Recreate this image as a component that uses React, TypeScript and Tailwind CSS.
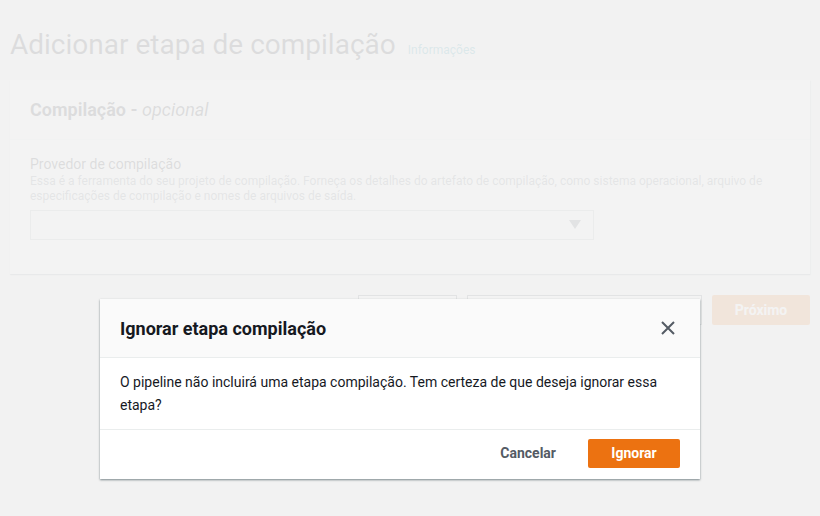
import React from "react";

const font = { fontFamily: "Roboto, 'Noto Sans', sans-serif" };

function CloseIcon() {
  return (
    <svg width="16" height="16" viewBox="0 0 16 16" fill="none">
      <path d="M2 2l12 12M14 2L2 14" stroke="#545b64" strokeWidth="2" />
    </svg>
  );
}

function BuildStepPage() {
  return (
    <div className="px-[10px]">
      <div className="flex items-baseline gap-[12px] pt-[28px] h-[80px]">
        <h1 className="text-[28px] leading-[34px] text-[#16191f]">Adicionar etapa de compilação</h1>
        <a className="text-[12px] text-[#0a8a9e]">Informações</a>
      </div>

      <div className="bg-white shadow-[0_1px_1px_0_rgba(0,28,36,0.3),1px_1px_1px_0_rgba(0,28,36,0.15)]">
        <div className="h-[60px] px-[20px] flex items-center border-b border-[#eaeded]">
          <h2 className="text-[18px] font-bold text-[#16191f]">
            Compilação - <i className="font-normal">opcional</i>
          </h2>
        </div>
        <div className="px-[20px] pt-[14px] pb-[34px]">
          <div className="text-[14px] leading-[20px] text-[#16191f]">Provedor de compilação</div>
          <div className="text-[12px] leading-[15px] text-[#687078] max-w-[760px]">
            Essa é a ferramenta do seu projeto de compilação. Forneça os detalhes do artefato de compilação, como sistema operacional, arquivo de especificações de compilação e nomes de arquivos de saída.
          </div>
          <div className="mt-[6px] w-[564px] h-[30px] border border-[#aab7b8] bg-white flex items-center justify-end pr-[12px]">
            <svg width="12" height="10" viewBox="0 0 12 10">
              <path d="M0 0h12L6 9z" fill="#545b64" />
            </svg>
          </div>
        </div>
      </div>

      <div className="flex justify-end gap-[10px] mt-[21px]">
        <button className="w-[99px] h-[30px] border border-[#545b64] bg-white text-[14px] font-bold text-[#545b64]">Cancelar</button>
        <button className="w-[235px] h-[30px] border border-[#545b64] bg-white text-[14px] font-bold text-[#545b64]">Ignorar etapa de compilação</button>
        <button className="w-[98px] h-[30px] bg-[#ec7211] text-[14px] font-bold text-white rounded-[2px]">Próximo</button>
      </div>
    </div>
  );
}

export default function App() {
  return (
    <div className="relative w-[820px] h-[516px] overflow-hidden bg-[#f2f3f3]" style={font}>
      <BuildStepPage />

      {/* Dimmed overlay */}
      <div className="absolute inset-0 bg-[#f2f2f2]/90" />

      {/* Modal */}
      <div className="absolute left-[100px] top-[299px] w-[600px] bg-white shadow-[0_1px_2px_0_rgba(0,28,36,0.5)]">
        <div className="h-[59px] bg-[#fafafa] border-b border-[#eaeded] px-[20px] flex items-center justify-between">
          <h3 className="text-[18px] font-bold text-[#16191f]">Ignorar etapa compilação</h3>
          <button className="w-[20px] h-[20px] flex items-center justify-center mr-[2px]">
            <CloseIcon />
          </button>
        </div>
        <div className="px-[20px] pt-[13px] pb-[12px] border-b border-[#eaeded] text-[14px] leading-[23px] text-[#16191f]">
          O pipeline não incluirá uma etapa compilação. Tem certeza de que deseja ignorar essa etapa?
        </div>
        <div className="h-[49px] px-[20px] pt-[9px] pb-[11px] flex items-start justify-end gap-[20px]">
          <button className="px-[12px] h-[29px] text-[14px] font-bold text-[#545b64]">Cancelar</button>
          <button className="w-[92px] h-[29px] bg-[#ec7211] rounded-[2px] text-[14px] font-bold text-white">Ignorar</button>
        </div>
      </div>
    </div>
  );
}
